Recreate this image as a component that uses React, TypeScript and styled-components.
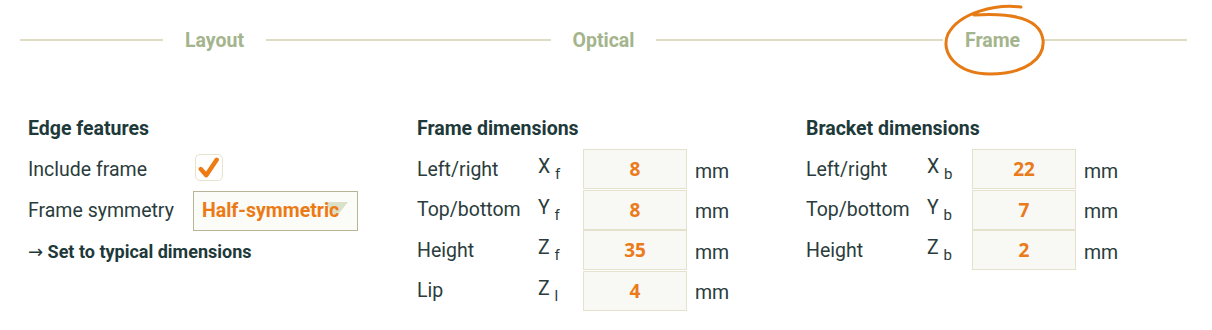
import styled, { createGlobalStyle } from 'styled-components';

const GlobalStyle = createGlobalStyle`
  body {
    margin: 0;
    background: #ffffff;
    font-family: Roboto, 'Liberation Sans', sans-serif;
    color: #2a3c3c;
  }
`;

const tabs = ['Layout', 'Optical', 'Frame'];

const frameFields = [
  { label: 'Left/right', sym: 'X', sub: 'f', value: '8' },
  { label: 'Top/bottom', sym: 'Y', sub: 'f', value: '8' },
  { label: 'Height', sym: 'Z', sub: 'f', value: '35' },
  { label: 'Lip', sym: 'Z', sub: 'l', value: '4' },
];

const bracketFields = [
  { label: 'Left/right', sym: 'X', sub: 'b', value: '22' },
  { label: 'Top/bottom', sym: 'Y', sub: 'b', value: '7' },
  { label: 'Height', sym: 'Z', sub: 'b', value: '2' },
];

export default function App() {
  return (
    <Page>
      <GlobalStyle />
      <TabBar>
        {tabs.map((t) => (
          <Tab key={t}>
            <TabLabel>
              {t}
              {t === 'Frame' && (
                <Circle viewBox="0 0 112 76" width="112" height="76">
                  <path
                    d="M83 5 C58 2, 22 10, 10 32 C2 50, 18 72, 52 72 C88 72, 107 56, 105 38 C103 20, 84 10, 36 13"
                    fill="none"
                    stroke="#e67a14"
                    strokeWidth="3"
                    strokeLinecap="round"
                  />
                </Circle>
              )}
            </TabLabel>
          </Tab>
        ))}
      </TabBar>
      <Columns>
        <Column>
          <Heading>Edge features</Heading>
          <OptionRow>
            <OptionLabel>Include frame</OptionLabel>
            <CheckBox>
              <svg viewBox="0 0 20 20" width="22" height="22">
                <path
                  d="M2.5 11 L7.5 16.5 L17 2.5"
                  fill="none"
                  stroke="#ee7a12"
                  strokeWidth="4"
                  strokeLinecap="round"
                  strokeLinejoin="round"
                />
              </svg>
            </CheckBox>
          </OptionRow>
          <OptionRow>
            <OptionLabel>Frame symmetry</OptionLabel>
            <Select>
              <SelectArrow viewBox="0 0 24 16" width="24" height="16">
                <polygon points="0,0 24,0 12,15" fill="#dbe0c8" />
              </SelectArrow>
              <SelectText>Half-symmetric</SelectText>
            </Select>
          </OptionRow>
          <LinkRow>
            <Arrow>→</Arrow> Set to typical dimensions
          </LinkRow>
        </Column>
        <Column>
          <Heading>Frame dimensions</Heading>
          {frameFields.map((f) => (
            <FieldRow key={f.label}>
              <FieldLabel>{f.label}</FieldLabel>
              <Symbol>
                {f.sym} <sub>{f.sub}</sub>
              </Symbol>
              <ValueBox>{f.value}</ValueBox>
              <Unit>mm</Unit>
            </FieldRow>
          ))}
        </Column>
        <Column>
          <Heading>Bracket dimensions</Heading>
          {bracketFields.map((f) => (
            <FieldRow key={f.label}>
              <FieldLabel>{f.label}</FieldLabel>
              <Symbol>
                {f.sym} <sub>{f.sub}</sub>
              </Symbol>
              <ValueBox>{f.value}</ValueBox>
              <Unit>mm</Unit>
            </FieldRow>
          ))}
        </Column>
      </Columns>
    </Page>
  );
}

const Page = styled.div`
  width: 1212px;
  height: 330px;
  padding: 0 25px 0 20px;
  box-sizing: border-box;
  overflow: hidden;
`;

const TabBar = styled.div`
  display: flex;
  height: 80px;
  align-items: center;
`;

const Tab = styled.div`
  flex: 1;
  display: flex;
  align-items: center;

  &::before,
  &::after {
    content: '';
    flex: 1;
    height: 1.5px;
    background: #dedcc2;
  }
`;

const TabLabel = styled.div`
  position: relative;
  padding: 2px 22px 0;
  font-size: 19.5px;
  font-weight: 700;
  line-height: 24px;
  color: #a4b48c;
`;

const Circle = styled.svg`
  position: absolute;
  left: 50%;
  top: 50%;
  transform: translate(-50%, -50%);
  margin-left: 1px;
  pointer-events: none;
`;

const Columns = styled.div`
  display: grid;
  grid-template-columns: repeat(3, 1fr);
  padding-top: 36px;
`;

const Column = styled.div`
  padding-left: 8px;
  display: flex;
  flex-direction: column;
`;

const Heading = styled.div`
  font-size: 19.5px;
  font-weight: 700;
  line-height: 26px;
  color: #1e393a;
  margin-bottom: 7px;
`;

const OptionRow = styled.div`
  display: flex;
  align-items: center;
  height: 41px;
`;

const OptionLabel = styled.div`
  width: 165px;
  font-size: 19.5px;
`;

const CheckBox = styled.div`
  width: 28px;
  height: 27px;
  margin-left: 2px;
  margin-top: -4px;
  box-sizing: border-box;
  border: 1px solid #e6e2cc;
  border-radius: 5px;
  display: flex;
  align-items: center;
  justify-content: center;
  background: #fff;
`;

const Select = styled.div`
  position: relative;
  width: 165px;
  height: 40px;
  box-sizing: border-box;
  border: 1px solid #b8b496;
  background: #fbfbf8;
  display: flex;
  align-items: center;
  padding-left: 8px;
`;

const SelectArrow = styled.svg`
  position: absolute;
  right: 9px;
  top: 10px;
`;

const SelectText = styled.span`
  position: relative;
  font-size: 19.5px;
  font-weight: 700;
  color: #ec7a14;
`;

const LinkRow = styled.div`
  height: 41px;
  display: flex;
  align-items: center;
  font-size: 18px;
  font-weight: 700;
  color: #1e393a;
  white-space: pre;
`;

const Arrow = styled.span`
  font-family: 'DejaVu Sans', sans-serif;
  font-weight: 400;
  font-size: 18px;
`;

const FieldRow = styled.div`
  display: grid;
  grid-template-columns: 121px 45px 104px auto;
  align-items: center;
  height: 40.5px;
`;

const FieldLabel = styled.div`
  font-size: 19.5px;
`;

const Symbol = styled.div`
  font-size: 19.5px;
  white-space: pre;

  sub {
    font-size: 15px;
    vertical-align: -6px;
  }
`;

const ValueBox = styled.div`
  height: 40px;
  box-sizing: border-box;
  border: 1px solid #e4e2cc;
  background: #f8f8f5;
  display: flex;
  align-items: center;
  justify-content: center;
  font-family: 'Open Sans', Roboto, sans-serif;
  font-size: 19px;
  font-weight: 700;
  color: #ea7a1a;
`;

const Unit = styled.div`
  padding-left: 8px;
  font-size: 19.5px;
  padding-top: 4px;
`;
